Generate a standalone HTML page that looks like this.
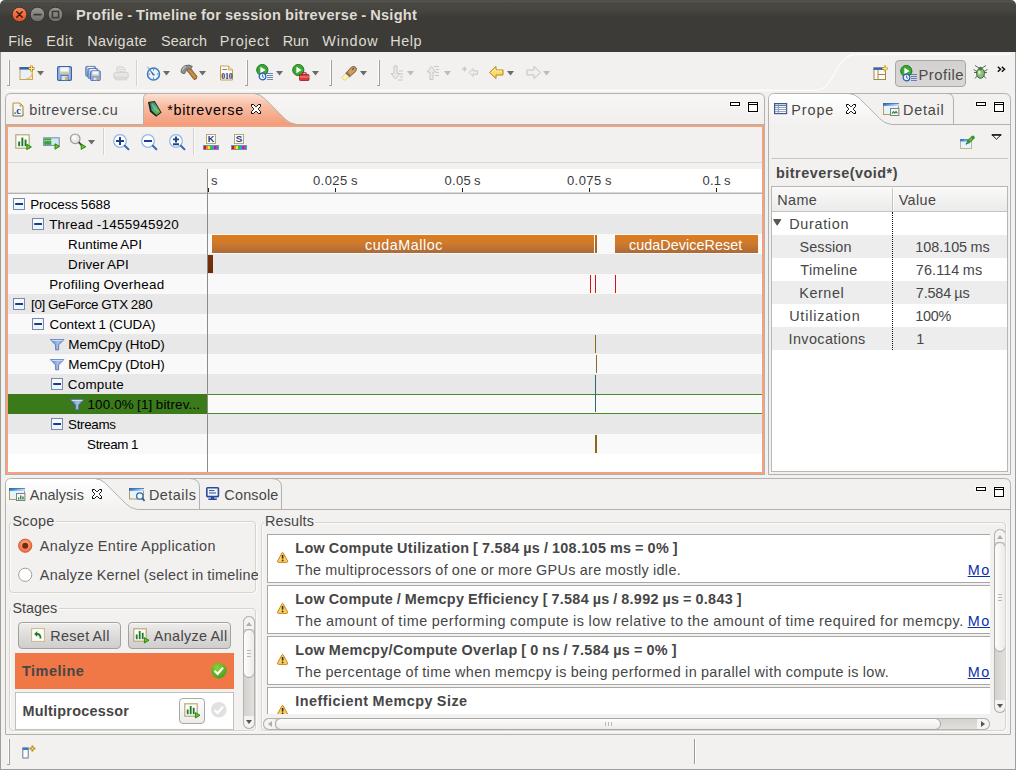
<!DOCTYPE html>
<html lang="en"><head><meta charset="utf-8"><title>Profile - Timeline for session bitreverse - Nsight</title>
<style>
html,body{margin:0;padding:0}
body{width:1016px;height:770px;overflow:hidden;background:#f2f1f0;position:relative;font-family:"Liberation Sans",sans-serif}
.abs{position:absolute}
svg.abs{overflow:visible}
#win{position:absolute;left:0;top:0;width:1016px;height:770px;overflow:hidden}
#titlebar{position:absolute;left:0;top:0;width:1016px;height:52px;background:linear-gradient(#44433e 0,#5b5a54 1px,#4a4944 2.5px,#464540 10px,#3d3c38 16px,#3c3b37 17px,#3c3b37 52px);border-radius:5px 5px 0 0}
#corners{position:absolute;left:0;top:0;width:1016px;height:8px;background:#fff}
#edges{position:absolute;left:0;top:52px;width:1014px;height:717px;border:1px solid #a09e9a;border-top:none;pointer-events:none}
.t{position:absolute;white-space:pre;line-height:20px;height:20px;word-spacing:-0.6px}
</style></head>
<body><div id="corners"></div><div id="win">
<div id="titlebar"></div>
<svg class="abs" style="left:10px;top:5px" width="60" height="20" viewBox="0 0 60 20">
<defs>
<linearGradient id="gclose" x1="0" y1="0" x2="0" y2="1"><stop offset="0" stop-color="#f58a5c"/><stop offset="1" stop-color="#df4f22"/></linearGradient>
<linearGradient id="ggrey" x1="0" y1="0" x2="0" y2="1"><stop offset="0" stop-color="#9a9991"/><stop offset="1" stop-color="#6d6c65"/></linearGradient>
</defs>
<circle cx="9.5" cy="9.5" r="7.3" fill="url(#gclose)" stroke="#2f2e2a" stroke-width="0.9"/>
<path d="M6.8 6.8 L12.2 12.2 M12.2 6.8 L6.8 12.2" stroke="#3a1206" stroke-width="1.3" stroke-linecap="round"/>
<circle cx="27.5" cy="9.5" r="7.3" fill="url(#ggrey)" stroke="#2f2e2a" stroke-width="0.9"/>
<path d="M24.2 9.7 H30.8" stroke="#3a3935" stroke-width="1.8" stroke-linecap="round"/>
<circle cx="45.5" cy="9.5" r="7.3" fill="url(#ggrey)" stroke="#2f2e2a" stroke-width="0.9"/>
<rect x="42.4" y="6.4" width="6.2" height="6.2" fill="none" stroke="#3a3935" stroke-width="1.5"/>
</svg>
<span class="t" style="left:76.08px;top:4.94px;font-size:14.6px;color:#dfdbd2;font-weight:700;letter-spacing:0.278px;">Profile - Timeline for session bitreverse - Nsight</span>
<span class="t" style="left:8.35px;top:31.01px;font-size:14.4px;color:#dfdbd2;letter-spacing:0.204px;">File</span>
<span class="t" style="left:46.14px;top:31.01px;font-size:14.4px;color:#dfdbd2;letter-spacing:0.578px;">Edit</span>
<span class="t" style="left:87.14px;top:31.01px;font-size:14.4px;color:#dfdbd2;letter-spacing:0.417px;">Navigate</span>
<span class="t" style="left:160.94px;top:31.01px;font-size:14.4px;color:#dfdbd2;letter-spacing:0.107px;">Search</span>
<span class="t" style="left:219.86px;top:31.01px;font-size:14.4px;color:#dfdbd2;letter-spacing:0.717px;">Project</span>
<span class="t" style="left:282.86px;top:31.01px;font-size:14.4px;color:#dfdbd2;letter-spacing:-0.302px;">Run</span>
<span class="t" style="left:322.28px;top:31.01px;font-size:14.4px;color:#dfdbd2;letter-spacing:0.832px;">Window</span>
<span class="t" style="left:390.31px;top:31.01px;font-size:14.4px;color:#dfdbd2;letter-spacing:0.505px;">Help</span>
<div class="abs" style="left:9px;top:60px;width:1px;height:25px;background:#a3a19d"></div><div class="abs" style="left:7px;top:85px;width:3px;height:1px;background:#a3a19d"></div><div class="abs" style="left:8px;top:60px;width:1px;height:25px;background:#fdfdfd"></div>
<svg class="abs" style="left:19px;top:65px" width="16" height="16" viewBox="0 0 16 16"><rect x="1" y="2.5" width="12.5" height="12" fill="#e8f0fb" stroke="#c9a648" stroke-width="1"/>
<rect x="0.5" y="2" width="13.5" height="2.6" fill="#3465a8"/>
<path d="M13.5 5 Q13.5 13.5 7 14" fill="none" stroke="#e8c050" stroke-width="1.2"/>
<path d="M12.5 0.5 V6.5 M9.5 3.5 H15.5" stroke="#b8860b" stroke-width="2.4"/><path d="M12.5 1 V6 M10 3.5 H15" stroke="#ffe680" stroke-width="1"/></svg>
<svg class="abs" style="left:37px;top:71px" width="7" height="5" viewBox="0 0 7 5"><path d="M0 0 H7 L3.5 4.6 Z" fill="#6b6b6b"/></svg>
<svg class="abs" style="left:57px;top:66px" width="15" height="15" viewBox="0 0 15 15"><rect x="0.6" y="0.6" width="13.8" height="13.8" rx="1.2" fill="#9db8e0" stroke="#3c64a8" stroke-width="1.2"/>
<rect x="3.2" y="1.2" width="8.6" height="6" fill="#f4f6fa"/><rect x="3.2" y="5.6" width="8.6" height="1.5" fill="#e8c878"/>
<rect x="4" y="9.4" width="7" height="5" fill="#d8e2f2" stroke="#3c64a8" stroke-width="0.8"/><rect x="8" y="10.8" width="2" height="3.4" fill="#e0b050"/></svg>
<svg class="abs" style="left:84.5px;top:66px" width="16" height="15" viewBox="0 0 16 15"><g transform="scale(0.7)"><g transform="translate(0.5,0)"><rect x="0.6" y="0.6" width="13.8" height="13.8" rx="1.2" fill="#9db8e0" stroke="#3c64a8" stroke-width="1.2"/>
<rect x="3.2" y="1.2" width="8.6" height="6" fill="#f4f6fa"/><rect x="3.2" y="5.6" width="8.6" height="1.5" fill="#e8c878"/>
<rect x="4" y="9.4" width="7" height="5" fill="#d8e2f2" stroke="#3c64a8" stroke-width="0.8"/><rect x="8" y="10.8" width="2" height="3.4" fill="#e0b050"/></g></g><g transform="translate(2.6,2.2) scale(0.7)"><rect x="0.6" y="0.6" width="13.8" height="13.8" rx="1.2" fill="#9db8e0" stroke="#3c64a8" stroke-width="1.2"/>
<rect x="3.2" y="1.2" width="8.6" height="6" fill="#f4f6fa"/><rect x="3.2" y="5.6" width="8.6" height="1.5" fill="#e8c878"/>
<rect x="4" y="9.4" width="7" height="5" fill="#d8e2f2" stroke="#3c64a8" stroke-width="0.8"/><rect x="8" y="10.8" width="2" height="3.4" fill="#e0b050"/></g><g transform="translate(5.2,4.4) scale(0.7)"><rect x="0.6" y="0.6" width="13.8" height="13.8" rx="1.2" fill="#9db8e0" stroke="#3c64a8" stroke-width="1.2"/>
<rect x="3.2" y="1.2" width="8.6" height="6" fill="#f4f6fa"/><rect x="3.2" y="5.6" width="8.6" height="1.5" fill="#e8c878"/>
<rect x="4" y="9.4" width="7" height="5" fill="#d8e2f2" stroke="#3c64a8" stroke-width="0.8"/><rect x="8" y="10.8" width="2" height="3.4" fill="#e0b050"/></g></svg>
<svg class="abs" style="left:113px;top:66px" width="16" height="15" viewBox="0 0 16 15"><path d="M4 1 H10 L12 3 V7 H4 Z" fill="#efefef" stroke="#cfcfcf"/><path d="M5.5 3.5 H10.5 M5.5 5.5 H10.5" stroke="#d6d6d6"/>
<rect x="0.8" y="6.5" width="14.4" height="6" rx="1.5" fill="#e6e5e4" stroke="#d2d1d0"/><rect x="2.5" y="11" width="11" height="3" fill="#dddcdb" stroke="#d2d1d0" stroke-width="0.6"/></svg>
<div class="abs" style="left:136px;top:60px;width:1px;height:26px;background:#d4d2cf"></div><div class="abs" style="left:137px;top:60px;width:1px;height:26px;background:#fbfbfa"></div>
<svg class="abs" style="left:146px;top:66px" width="15" height="15" viewBox="0 0 15 15"><circle cx="7.5" cy="8" r="6" fill="#eef4fb" stroke="#3a78c0" stroke-width="1.5"/>
<path d="M7.5 3.2 V4.6 M7.5 11.4 V12.8 M2.8 8 H4.2 M10.8 8 H12.2" stroke="#3a78c0" stroke-width="1"/>
<path d="M1.5 0.8 L9 9.2 L7 9.6 Z" fill="#27508c"/><path d="M1 0.5 L8.5 9" stroke="#8899bb" stroke-width="0.8"/></svg>
<svg class="abs" style="left:163px;top:71px" width="7" height="5" viewBox="0 0 7 5"><path d="M0 0 H7 L3.5 4.6 Z" fill="#6b6b6b"/></svg>
<svg class="abs" style="left:180px;top:64px" width="18" height="17" viewBox="0 0 18 17"><path d="M6.2 5.6 L9.8 3.2 L17 12.4 Q17.2 15.6 14 15.6 Z" fill="#b87a3a" stroke="#7a4a1c" stroke-width="0.7"/><path d="M8.4 5 L15.6 14" stroke="#d8a060" stroke-width="1"/>
<path d="M1 8.2 Q0.8 3.6 5.2 1.6 Q9 0 12.4 2.4 L10.2 5.6 Q8.6 4.4 7.2 5 L4.8 9.4 Q3 10.4 1 8.2 Z" fill="#8c8c8c" stroke="#5a5a5a" stroke-width="0.7"/><path d="M2.4 6.4 Q3 3.6 6 2.6" stroke="#c8c8c8" stroke-width="1.1" fill="none"/></svg>
<svg class="abs" style="left:199px;top:71px" width="7" height="5" viewBox="0 0 7 5"><path d="M0 0 H7 L3.5 4.6 Z" fill="#6b6b6b"/></svg>
<svg class="abs" style="left:219px;top:65px" width="15" height="16" viewBox="0 0 15 16"><path d="M1.5 1 H9.5 L13.5 5 V15 H1.5 Z" fill="#fdfbf2" stroke="#c8a24a" stroke-width="1"/><path d="M9.5 1 V5 H13.5" fill="#f0dca0" stroke="#c8a24a" stroke-width="0.8"/>
<path d="M3.5 4.5 H8" stroke="#5b7fc0" stroke-width="1"/>
<text x="2.2" y="13.6" font-family="Liberation Serif, serif" font-weight="700" font-size="7.6" fill="#1a2f78" textLength="11.5" lengthAdjust="spacingAndGlyphs">010</text></svg>
<div class="abs" style="left:247px;top:60px;width:1px;height:25px;background:#a3a19d"></div><div class="abs" style="left:245px;top:85px;width:3px;height:1px;background:#a3a19d"></div><div class="abs" style="left:246px;top:60px;width:1px;height:25px;background:#fdfdfd"></div>
<svg class="abs" style="left:256px;top:64px" width="18" height="17" viewBox="0 0 18 17"><circle cx="6.3" cy="6" r="5.6" fill="#3aa832" stroke="#1f7a1c" stroke-width="1"/><path d="M4.4 2.8 L9.6 6 L4.4 9.2 Z" fill="#fff"/><circle cx="6.5" cy="12.5" r="3.3" fill="#e6eefb" stroke="#2a5cb0" stroke-width="1.2"/><path d="M6.5 10.6 V12.6 L8 13.4" stroke="#2a5cb0" stroke-width="0.9" fill="none"/>
<path d="M11 9.5 H17 M11 11.5 H17 M11 13.5 H17 M11 15.5 H17" stroke="#5878b8" stroke-width="0.9"/></svg>
<svg class="abs" style="left:275.5px;top:71px" width="7" height="5" viewBox="0 0 7 5"><path d="M0 0 H7 L3.5 4.6 Z" fill="#6b6b6b"/></svg>
<svg class="abs" style="left:292px;top:64px" width="18" height="17" viewBox="0 0 18 17"><circle cx="6.3" cy="6" r="5.6" fill="#3aa832" stroke="#1f7a1c" stroke-width="1"/><path d="M4.4 2.8 L9.6 6 L4.4 9.2 Z" fill="#fff"/><rect x="7.5" y="10.5" width="9.5" height="6" rx="0.8" fill="#d83a3a" stroke="#a01818" stroke-width="0.8"/><path d="M10.3 10.3 V8.8 H14.2 V10.3" fill="none" stroke="#a01818" stroke-width="1"/><path d="M7.6 13 H17" stroke="#f6b0b0" stroke-width="0.8"/></svg>
<svg class="abs" style="left:311.5px;top:71px" width="7" height="5" viewBox="0 0 7 5"><path d="M0 0 H7 L3.5 4.6 Z" fill="#6b6b6b"/></svg>
<div class="abs" style="left:331px;top:60px;width:1px;height:25px;background:#a3a19d"></div><div class="abs" style="left:329px;top:85px;width:3px;height:1px;background:#a3a19d"></div><div class="abs" style="left:330px;top:60px;width:1px;height:25px;background:#fdfdfd"></div>
<svg class="abs" style="left:341px;top:64px" width="17" height="17" viewBox="0 0 17 17"><path d="M0.8 13.6 L3.6 16.4 L8.4 12.4 L5 9 Z" fill="#fff4b0" stroke="#d8b850" stroke-width="0.6"/>
<path d="M4.8 9.2 L10.6 3 Q13 1.6 15 3.6 Q16 5.6 14.6 7.4 L8.6 12.8 Z" fill="#d89a50" stroke="#5a4632" stroke-width="0.8"/>
<path d="M6.2 7.8 L9.8 11.6 L8.6 12.8 L4.8 9.2 Z" fill="#777"/><rect x="11" y="4.4" width="2" height="1.4" fill="#3a5a9a" transform="rotate(-45 12 5)"/></svg>
<svg class="abs" style="left:360px;top:71px" width="7" height="5" viewBox="0 0 7 5"><path d="M0 0 H7 L3.5 4.6 Z" fill="#6b6b6b"/></svg>
<div class="abs" style="left:378.5px;top:60px;width:1px;height:25px;background:#a3a19d"></div><div class="abs" style="left:376.5px;top:85px;width:3px;height:1px;background:#a3a19d"></div><div class="abs" style="left:377.5px;top:60px;width:1px;height:25px;background:#fdfdfd"></div>
<svg class="abs" style="left:389px;top:65px" width="15" height="16" viewBox="0 0 15 16"><path d="M5 1 H8 V8.5 H11 L6.5 14 L2 8.5 H5 Z" fill="#ebeae9" stroke="#c4c3c1" stroke-width="0.9"/><path d="M10 6 H14 M11 9 H14 M11 12 H14 M9 15 H14" stroke="#c4c3c1" stroke-width="0.9"/></svg>
<svg class="abs" style="left:407px;top:71px" width="7" height="5" viewBox="0 0 7 5"><path d="M0 0 H7 L3.5 4.6 Z" fill="#bdbcba"/></svg>
<svg class="abs" style="left:425px;top:65px" width="15" height="16" viewBox="0 0 15 16"><path d="M5 14.5 H8 V7 H11 L6.5 1.5 L2 7 H5 Z" fill="#ebeae9" stroke="#c4c3c1" stroke-width="0.9"/><path d="M9 1.5 H14 M11 4.5 H14 M11 7.5 H14 M10 10.5 H14" stroke="#c4c3c1" stroke-width="0.9"/></svg>
<svg class="abs" style="left:443.5px;top:71px" width="7" height="5" viewBox="0 0 7 5"><path d="M0 0 H7 L3.5 4.6 Z" fill="#bdbcba"/></svg>
<svg class="abs" style="left:461px;top:65px" width="18" height="15" viewBox="0 0 18 15"><path d="M8 7.5 L12 3.5 V5.8 H16.5 V9.2 H12 V11.5 Z" fill="#efeeed" stroke="#c4c3c1" stroke-width="0.9"/><path d="M3.5 1.5 V6.5 M1 4 H6 M1.8 2.2 L5.2 5.8 M5.2 2.2 L1.8 5.8" stroke="#c4c3c1" stroke-width="0.8"/></svg>
<svg class="abs" style="left:488px;top:65px" width="17" height="15" viewBox="0 0 17 15"><path d="M1.5 7.5 L8 1.5 V5 H15 V10 H8 V13.5 Z" fill="#fbd96a" stroke="#b8860b" stroke-width="1"/><path d="M3.4 7.4 L7.2 3.9 V6 H14" fill="none" stroke="#fff3b8" stroke-width="0.9"/></svg>
<svg class="abs" style="left:507px;top:71px" width="7" height="5" viewBox="0 0 7 5"><path d="M0 0 H7 L3.5 4.6 Z" fill="#6b6b6b"/></svg>
<svg class="abs" style="left:525px;top:65px" width="17" height="15" viewBox="0 0 17 15"><path d="M15.5 7.5 L9 1.5 V5 H2 V10 H9 V13.5 Z" fill="#f0efee" stroke="#c4c3c1" stroke-width="1"/></svg>
<svg class="abs" style="left:543px;top:71px" width="7" height="5" viewBox="0 0 7 5"><path d="M0 0 H7 L3.5 4.6 Z" fill="#bdbcba"/></svg>
<svg class="abs" style="left:0px;top:52px" width="1016" height="42" viewBox="0 0 1016 42"><path d="M6 38.4 H814 C837 38.4 833 2.4 857 2.4 H1011" fill="none" stroke="#fdfdfc" stroke-width="1.1"/></svg>
<svg class="abs" style="left:873px;top:65px" width="16" height="16" viewBox="0 0 16 16"><rect x="1" y="3" width="11.5" height="11.5" fill="#fbfaf4" stroke="#a08848" stroke-width="1"/><rect x="0.5" y="2.5" width="12.5" height="2.4" fill="#3465a8"/>
<path d="M5 5 V14.5 M5 9.5 H12.5" stroke="#a08848" stroke-width="1"/>
<path d="M12 0.5 V6.5 M9 3.5 H15" stroke="#c8960c" stroke-width="2.2"/><path d="M12 1.2 V5.8 M9.7 3.5 H14.3" stroke="#fff0a0" stroke-width="0.9"/></svg>
<div class="abs" style="left:895px;top:60px;width:71px;height:27px;border:1px solid #a7a6a3;border-radius:4px;background:linear-gradient(#d2d1d0,#d9d8d7);box-sizing:border-box"></div>
<svg class="abs" style="left:899.5px;top:65px" width="18" height="17" viewBox="0 0 18 17"><circle cx="6.3" cy="6" r="5.6" fill="#3aa832" stroke="#1f7a1c" stroke-width="1"/><path d="M4.4 2.8 L9.6 6 L4.4 9.2 Z" fill="#fff"/><circle cx="6.5" cy="12.5" r="3.3" fill="#e6eefb" stroke="#2a5cb0" stroke-width="1.2"/><path d="M6.5 10.6 V12.6 L8 13.4" stroke="#2a5cb0" stroke-width="0.9" fill="none"/>
<path d="M11 9.5 H17 M11 11.5 H17 M11 13.5 H17 M11 15.5 H17" stroke="#5878b8" stroke-width="0.9"/></svg>
<span class="t" style="left:918.49px;top:64.87px;font-size:14.8px;color:#4a4a4a;letter-spacing:0.502px;">Profile</span>
<svg class="abs" style="left:972px;top:64px" width="17" height="16" viewBox="0 0 17 16"><path d="M8.5 5 L3 1.5 M8.5 5 L14 1.5 M2 8.5 H15 M3 14.5 L6 11 M14 14.5 L11 11 M1.5 5.5 L5 7.5 M15.5 5.5 L12 7.5" stroke="#3f5f4a" stroke-width="0.9"/>
<ellipse cx="8.5" cy="9.3" rx="3.9" ry="5" fill="#8fc07a" stroke="#2f5a34" stroke-width="1"/><circle cx="8.5" cy="4.6" r="1.9" fill="#4a7a4a"/>
<ellipse cx="7.4" cy="8.4" rx="1.3" ry="2" fill="#d6efc4"/></svg>
<svg class="abs" style="left:997px;top:66px" width="9" height="7" viewBox="0 0 9 7"><path d="M0.8 0.8 L3.5 3.3 L0.8 5.8 M4.8 0.8 L7.5 3.3 L4.8 5.8" fill="none" stroke="#111" stroke-width="1.5"/></svg>
<svg class="abs" style="left:5px;top:93px" width="760" height="33" viewBox="0 0 760 33">
<defs><linearGradient id="gtab" x1="0" y1="0" x2="0" y2="1"><stop offset="0" stop-color="#fde3d6"/><stop offset="0.35" stop-color="#f8bfa6"/><stop offset="1" stop-color="#f29a78"/></linearGradient>
<linearGradient id="gstrip" x1="0" y1="0" x2="0" y2="1"><stop offset="0" stop-color="#f7f6f5"/><stop offset="1" stop-color="#f0efee"/></linearGradient></defs>
<path d="M0.5 32 V6 Q0.5 0.5 6 0.5 H754 Q759.5 0.5 759.5 6 V32 Z" fill="url(#gstrip)" stroke="#b3b1ad"/>
<path d="M0.5 31.5 H759.5" stroke="#b3b1ad"/>
<path d="M138.5 32.5 V5.5 Q138.5 0.5 143.5 0.5 H249 Q255 1 259.4 5.3 L279.8 25.7 Q284 30.5 291.5 31.5 V32.5 Z" fill="url(#gtab)"/>
<path d="M138.5 31.5 V5.5 Q138.5 0.5 143.5 0.5 H249 Q255 1 259.4 5.3 L279.8 25.7 Q284 30.5 291.5 31.5" fill="none" stroke="#b3b1ad"/>
</svg>
<div class="abs" style="left:5px;top:124px;width:760px;height:351px;box-sizing:border-box;border:1px solid #b3b1ad;border-top:none"></div>
<div class="abs" style="left:6px;top:125px;width:758px;height:349px;box-sizing:border-box;border:2px solid #f4a17e;background:#f2f1f0"></div>
<svg class="abs" style="left:11.5px;top:101.5px" width="12" height="15" viewBox="0 0 12 15"><defs><linearGradient id="gcf" x1="0" y1="0" x2="0" y2="1"><stop offset="0" stop-color="#c09828"/><stop offset="1" stop-color="#7c6c34"/></linearGradient></defs>
<path d="M1 1 H8 L11 4 V14 H1 Z" fill="#f2f6fc" stroke="url(#gcf)" stroke-width="1"/><path d="M7.6 1.4 V4.4 H10.6 Z" fill="#c8a040"/>
<text x="4.2" y="11.9" font-family="Liberation Serif, serif" font-weight="700" font-size="10.5" fill="#1a4f9a">c</text><rect x="2.4" y="10.4" width="1.4" height="1.4" fill="#1a4f9a"/></svg>
<span class="t" style="left:29.34px;top:100.01px;font-size:14.4px;color:#4a4a4a;letter-spacing:0.499px;">bitreverse.cu</span>
<svg class="abs" style="left:147px;top:100px" width="16" height="18" viewBox="0 0 16 18"><defs><linearGradient id="gnv" x1="0" y1="0" x2="1" y2="1"><stop offset="0" stop-color="#2a6a3a"/><stop offset="0.45" stop-color="#4aa8a0"/><stop offset="0.75" stop-color="#5ab048"/><stop offset="1" stop-color="#2f7a2a"/></linearGradient></defs>
<path d="M1 2 L7.8 1.1 L14.6 12.6 L9.2 16.7 L3 11.7 Z" fill="#14241c"/>
<path d="M2.6 2.6 L7.4 2 L13.6 12.2 L9.6 15.2 L4.6 10.6 Z" fill="url(#gnv)"/>
<path d="M5.4 3 Q8 8 12.6 11.4 L11 12.8 Q6.6 9.6 4 4 Z" fill="#a8d070" opacity="0.55"/></svg>
<span class="t" style="left:167.14px;top:99.61px;font-size:14.4px;color:#000;letter-spacing:0.728px;">*bitreverse</span>
<svg class="abs" style="left:251px;top:104px" width="10" height="10" viewBox="0 0 10 10"><path d="M0.5 0.5 H2.5 L4.5 2.5 H5.5 L7.5 0.5 H9.5 V2.5 L7.5 4.5 V5.5 L9.5 7.5 V9.5 H7.5 L5.5 7.5 H4.5 L2.5 9.5 H0.5 V7.5 L2.5 5.5 V4.5 L0.5 2.5 Z" fill="#fff" stroke="#000" stroke-width="1" stroke-linejoin="miter"/></svg>
<svg class="abs" style="left:729px;top:101px" width="30" height="12" viewBox="0 0 30 12"><rect x="0.5" y="0.5" width="11" height="5" fill="none" stroke="#fafafa"/><rect x="1.5" y="1.5" width="9" height="3" fill="#fff" stroke="#000"/>
<rect x="18.5" y="0.5" width="11" height="11" fill="none" stroke="#fafafa"/><rect x="19.5" y="1.5" width="9" height="9" fill="#fff" stroke="#000"/><path d="M19 3.5 H29" stroke="#000"/></svg>
<svg class="abs" style="left:14.5px;top:133.5px" width="18" height="17" viewBox="0 0 18 17"><rect x="0.8" y="0.8" width="13.4" height="13.4" fill="#fcfcf8" stroke="#b8a878" stroke-width="1.2"/>
<rect x="3.2" y="7.5" width="1.9" height="4.7" fill="#1f7a2a"/><rect x="6.4" y="3.6" width="1.9" height="8.6" fill="#1f7a2a"/><rect x="9.6" y="5.6" width="1.9" height="6.6" fill="#1f7a2a"/>
<g transform="translate(11.4,9.6)"><path d="M0.4 0.6 L5 3.3 L0.4 6 Z" fill="#5ccc1e" stroke="#2a7a10" stroke-width="0.9" stroke-linejoin="round"/></g></svg>
<svg class="abs" style="left:42.5px;top:137px" width="18" height="14" viewBox="0 0 18 14"><rect x="0.6" y="0.8" width="15.6" height="7.6" fill="#cfe8f4" stroke="#7a8aa8" stroke-width="1"/><rect x="1.2" y="1.4" width="7" height="6.4" fill="#3aa040"/><rect x="1.2" y="3" width="7" height="1.2" fill="#8fd08f"/>
<g transform="translate(11.6,6.2)"><path d="M0.4 0.6 L5 3.3 L0.4 6 Z" fill="#5ccc1e" stroke="#2a7a10" stroke-width="0.9" stroke-linejoin="round"/></g></svg>
<svg class="abs" style="left:69px;top:133px" width="19" height="18" viewBox="0 0 19 18"><circle cx="6.2" cy="5.8" r="4.8" fill="#e9e9e9" stroke="#9a9a9a" stroke-width="1.2"/><circle cx="5.2" cy="4.8" r="2.2" fill="#fafafa"/>
<path d="M9.6 9.2 L13 12.6" stroke="#444" stroke-width="1.8"/><g transform="translate(11.8,10.4)"><path d="M0.4 0.6 L5 3.3 L0.4 6 Z" fill="#5ccc1e" stroke="#2a7a10" stroke-width="0.9" stroke-linejoin="round"/></g></svg>
<svg class="abs" style="left:88.2px;top:140.2px" width="7" height="5" viewBox="0 0 7 5"><path d="M0 0 H7 L3.5 4.6 Z" fill="#6b6b6b"/></svg>
<div class="abs" style="left:103px;top:128px;width:1px;height:27px;background:#d4d2cf"></div><div class="abs" style="left:104px;top:128px;width:1px;height:27px;background:#fbfbfa"></div>
<svg class="abs" style="left:111.7px;top:133px" width="20" height="19" viewBox="0 0 20 19"><circle cx="8" cy="8" r="6.3" fill="#fdfeff" stroke="#94b8e0" stroke-width="1.3"/><path d="M12.8 12.8 L16.4 16.2" stroke="#3a68b0" stroke-width="2" stroke-linecap="round"/><path d="M4 8 H12 M8 4 V12" stroke="#1f3f8a" stroke-width="2"/></svg>
<svg class="abs" style="left:140px;top:133px" width="20" height="19" viewBox="0 0 20 19"><circle cx="8" cy="8" r="6.3" fill="#fdfeff" stroke="#94b8e0" stroke-width="1.3"/><path d="M12.8 12.8 L16.4 16.2" stroke="#3a68b0" stroke-width="2" stroke-linecap="round"/><path d="M4 8 H12" stroke="#1f3f8a" stroke-width="2"/></svg>
<svg class="abs" style="left:168px;top:133px" width="20" height="19" viewBox="0 0 20 19"><circle cx="8" cy="8" r="6.3" fill="#fdfeff" stroke="#94b8e0" stroke-width="1.3"/><path d="M12.8 12.8 L16.4 16.2" stroke="#3a68b0" stroke-width="2" stroke-linecap="round"/><path d="M5 6.4 H11 M8 3.4 V9.4 M5 11.2 H11" stroke="#1f3f8a" stroke-width="1.9"/></svg>
<div class="abs" style="left:193px;top:128px;width:1px;height:27px;background:#d4d2cf"></div><div class="abs" style="left:194px;top:128px;width:1px;height:27px;background:#fbfbfa"></div>
<svg class="abs" style="left:203px;top:134px" width="16" height="16" viewBox="0 0 16 16"><rect x="3.5" y="0.5" width="9" height="9" fill="#f8fbff" stroke="#b8a870" stroke-width="1"/>
<text x="8" y="8.2" text-anchor="middle" font-family="Liberation Sans, sans-serif" font-weight="700" font-size="8.8" fill="#1f3f8a" textLength="6.6" lengthAdjust="spacingAndGlyphs">K</text>
<rect x="0" y="11" width="16" height="5" fill="#7090b4"/><rect x="1" y="12" width="2" height="3" fill="#e01010"/><rect x="3" y="12" width="2" height="3" fill="#f88a10"/><rect x="5" y="12" width="2" height="3" fill="#f8f010"/><rect x="7" y="12" width="2" height="3" fill="#30c030"/><rect x="9" y="12" width="2" height="3" fill="#18a8e0"/><rect x="11" y="12" width="2" height="3" fill="#d01888"/><rect x="13" y="12" width="2" height="3" fill="#8858b8"/></svg>
<svg class="abs" style="left:231px;top:134px" width="16" height="16" viewBox="0 0 16 16"><rect x="3.5" y="0.5" width="9" height="9" fill="#f8fbff" stroke="#b8a870" stroke-width="1"/>
<text x="8" y="8.2" text-anchor="middle" font-family="Liberation Sans, sans-serif" font-weight="700" font-size="8.8" fill="#1f3f8a" textLength="6.6" lengthAdjust="spacingAndGlyphs">S</text>
<rect x="0" y="11" width="16" height="5" fill="#7090b4"/><rect x="1" y="12" width="2" height="3" fill="#e01010"/><rect x="3" y="12" width="2" height="3" fill="#f88a10"/><rect x="5" y="12" width="2" height="3" fill="#f8f010"/><rect x="7" y="12" width="2" height="3" fill="#30c030"/><rect x="9" y="12" width="2" height="3" fill="#18a8e0"/><rect x="11" y="12" width="2" height="3" fill="#d01888"/><rect x="13" y="12" width="2" height="3" fill="#8858b8"/></svg>
<div class="abs" style="left:8px;top:162px;width:754px;height:1px;background:#dad8d5"></div>
<div class="abs" style="left:208px;top:169px;width:554px;height:23px;background:#fff"></div>
<div class="abs" style="left:8px;top:193px;width:754px;height:1px;background:#b4b2ae"></div>
<div class="abs" style="left:8px;top:192px;width:754px;height:1px;background:#dcdad7"></div>
<div class="abs" style="left:8px;top:194px;width:754px;height:20px;background:#f9f9f9"></div>
<div class="abs" style="left:8px;top:214px;width:754px;height:20px;background:#e8e8e8"></div>
<div class="abs" style="left:8px;top:234px;width:754px;height:20px;background:#f9f9f9"></div>
<div class="abs" style="left:8px;top:254px;width:754px;height:20px;background:#e8e8e8"></div>
<div class="abs" style="left:8px;top:274px;width:754px;height:20px;background:#f9f9f9"></div>
<div class="abs" style="left:8px;top:294px;width:754px;height:20px;background:#e8e8e8"></div>
<div class="abs" style="left:8px;top:314px;width:754px;height:20px;background:#f9f9f9"></div>
<div class="abs" style="left:8px;top:334px;width:754px;height:20px;background:#e8e8e8"></div>
<div class="abs" style="left:8px;top:354px;width:754px;height:20px;background:#f9f9f9"></div>
<div class="abs" style="left:8px;top:374px;width:754px;height:20px;background:#e8e8e8"></div>
<div class="abs" style="left:8px;top:394px;width:754px;height:20px;background:#f9f9f9"></div>
<div class="abs" style="left:8px;top:414px;width:754px;height:20px;background:#e8e8e8"></div>
<div class="abs" style="left:8px;top:434px;width:754px;height:20px;background:#f9f9f9"></div>
<div class="abs" style="left:8px;top:454px;width:754px;height:18px;background:#fff"></div>
<div class="abs" style="left:8px;top:394px;width:199px;height:20px;background:#3b7a1b"></div>
<div class="abs" style="left:208px;top:394px;width:554px;height:20px;box-sizing:border-box;border-top:1px solid #4a8a28;border-bottom:1px solid #4a8a28;background:#fafafa"></div>
<div class="abs" style="left:207px;top:169px;width:1px;height:303px;background:#8d8b87"></div>
<div class="abs" style="left:208px;top:188px;width:1px;height:4px;background:#222"></div>
<div class="abs" style="left:335px;top:188px;width:1px;height:4px;background:#222"></div>
<div class="abs" style="left:462px;top:188px;width:1px;height:4px;background:#222"></div>
<div class="abs" style="left:589px;top:188px;width:1px;height:4px;background:#222"></div>
<div class="abs" style="left:716px;top:188px;width:1px;height:4px;background:#222"></div>
<span class="t" style="left:210.93px;top:170.90px;font-size:13px;color:#3a3a3a;letter-spacing:0.000px;">s</span>
<span class="t" style="left:312.91px;top:170.90px;font-size:13px;color:#3a3a3a;letter-spacing:0.443px;">0.025 s</span>
<span class="t" style="left:444.58px;top:170.90px;font-size:13px;color:#3a3a3a;letter-spacing:0.245px;">0.05 s</span>
<span class="t" style="left:566.91px;top:170.90px;font-size:13px;color:#3a3a3a;letter-spacing:0.443px;">0.075 s</span>
<span class="t" style="left:702.58px;top:170.90px;font-size:13px;color:#3a3a3a;letter-spacing:0.113px;">0.1 s</span>
<span class="t" style="left:30.17px;top:195.26px;font-size:13.4px;color:#000;letter-spacing:-0.101px;">Process 5688</span>
<svg class="abs" style="left:13px;top:198px" width="12" height="12" viewBox="0 0 12 12"><rect x="0.5" y="0.5" width="11" height="11" fill="#eaf7fe" stroke="#7c88aa"/><rect x="1.5" y="1.5" width="9" height="4" fill="#f6fcff"/><path d="M2.2 6 H10" stroke="#1f3a8a" stroke-width="2"/></svg>
<span class="t" style="left:49.14px;top:215.26px;font-size:13.4px;color:#000;letter-spacing:0.298px;">Thread -1455945920</span>
<svg class="abs" style="left:32px;top:218px" width="12" height="12" viewBox="0 0 12 12"><rect x="0.5" y="0.5" width="11" height="11" fill="#eaf7fe" stroke="#7c88aa"/><rect x="1.5" y="1.5" width="9" height="4" fill="#f6fcff"/><path d="M2.2 6 H10" stroke="#1f3a8a" stroke-width="2"/></svg>
<span class="t" style="left:68.10px;top:235.26px;font-size:13.4px;color:#000;letter-spacing:0.002px;">Runtime API</span>
<span class="t" style="left:68.10px;top:255.26px;font-size:13.4px;color:#000;letter-spacing:0.111px;">Driver API</span>
<span class="t" style="left:49.17px;top:275.26px;font-size:13.4px;color:#000;letter-spacing:0.274px;">Profiling Overhead</span>
<span class="t" style="left:30.91px;top:295.26px;font-size:13.4px;color:#000;letter-spacing:-0.248px;">[0] GeForce GTX 280</span>
<svg class="abs" style="left:13px;top:298px" width="12" height="12" viewBox="0 0 12 12"><rect x="0.5" y="0.5" width="11" height="11" fill="#eaf7fe" stroke="#7c88aa"/><rect x="1.5" y="1.5" width="9" height="4" fill="#f6fcff"/><path d="M2.2 6 H10" stroke="#1f3a8a" stroke-width="2"/></svg>
<span class="t" style="left:49.60px;top:315.26px;font-size:13.4px;color:#000;letter-spacing:-0.048px;">Context 1 (CUDA)</span>
<svg class="abs" style="left:32px;top:318px" width="12" height="12" viewBox="0 0 12 12"><rect x="0.5" y="0.5" width="11" height="11" fill="#eaf7fe" stroke="#7c88aa"/><rect x="1.5" y="1.5" width="9" height="4" fill="#f6fcff"/><path d="M2.2 6 H10" stroke="#1f3a8a" stroke-width="2"/></svg>
<span class="t" style="left:68.26px;top:335.26px;font-size:13.4px;color:#000;letter-spacing:0.037px;">MemCpy (HtoD)</span>
<svg class="abs" style="left:50px;top:339px" width="15" height="12" viewBox="0 0 15 12"><defs><linearGradient id="gfun" x1="0" y1="0" x2="1" y2="0"><stop offset="0" stop-color="#5a80c4"/><stop offset="0.55" stop-color="#a8c0e6"/><stop offset="1" stop-color="#7090cc"/></linearGradient></defs>
<path d="M0.4 0.6 H13.8 L8.6 6 V10.8 H5.6 V6 Z" fill="url(#gfun)" stroke="#4a6cb0" stroke-width="0.8"/><path d="M1.6 1.4 H12.6" stroke="#dce8f8" stroke-width="0.9"/></svg>
<span class="t" style="left:68.26px;top:355.26px;font-size:13.4px;color:#000;letter-spacing:0.037px;">MemCpy (DtoH)</span>
<svg class="abs" style="left:50px;top:359px" width="15" height="12" viewBox="0 0 15 12"><defs><linearGradient id="gfun" x1="0" y1="0" x2="1" y2="0"><stop offset="0" stop-color="#5a80c4"/><stop offset="0.55" stop-color="#a8c0e6"/><stop offset="1" stop-color="#7090cc"/></linearGradient></defs>
<path d="M0.4 0.6 H13.8 L8.6 6 V10.8 H5.6 V6 Z" fill="url(#gfun)" stroke="#4a6cb0" stroke-width="0.8"/><path d="M1.6 1.4 H12.6" stroke="#dce8f8" stroke-width="0.9"/></svg>
<span class="t" style="left:67.77px;top:375.26px;font-size:13.4px;color:#000;letter-spacing:0.262px;">Compute</span>
<svg class="abs" style="left:51px;top:378px" width="12" height="12" viewBox="0 0 12 12"><rect x="0.5" y="0.5" width="11" height="11" fill="#eaf7fe" stroke="#7c88aa"/><rect x="1.5" y="1.5" width="9" height="4" fill="#f6fcff"/><path d="M2.2 6 H10" stroke="#1f3a8a" stroke-width="2"/></svg>
<span class="t" style="left:87.46px;top:395.26px;font-size:13.4px;color:#000;letter-spacing:0.162px;">100.0% [1] bitrev...</span>
<svg class="abs" style="left:69.5px;top:399px" width="15" height="12" viewBox="0 0 15 12"><defs><linearGradient id="gfun" x1="0" y1="0" x2="1" y2="0"><stop offset="0" stop-color="#5a80c4"/><stop offset="0.55" stop-color="#a8c0e6"/><stop offset="1" stop-color="#7090cc"/></linearGradient></defs>
<path d="M0.4 0.6 H13.8 L8.6 6 V10.8 H5.6 V6 Z" fill="url(#gfun)" stroke="#4a6cb0" stroke-width="0.8"/><path d="M1.6 1.4 H12.6" stroke="#dce8f8" stroke-width="0.9"/></svg>
<span class="t" style="left:68.07px;top:415.26px;font-size:13.4px;color:#000;letter-spacing:-0.316px;">Streams</span>
<svg class="abs" style="left:51px;top:418px" width="12" height="12" viewBox="0 0 12 12"><rect x="0.5" y="0.5" width="11" height="11" fill="#eaf7fe" stroke="#7c88aa"/><rect x="1.5" y="1.5" width="9" height="4" fill="#f6fcff"/><path d="M2.2 6 H10" stroke="#1f3a8a" stroke-width="2"/></svg>
<span class="t" style="left:87.07px;top:435.26px;font-size:13.4px;color:#000;letter-spacing:-0.350px;">Stream 1</span>
<div class="abs" style="left:212px;top:235px;width:382px;height:18px;background:linear-gradient(#dd7c20,#d07a2a 45%,#ab6a3a)"></div>
<div class="abs" style="left:595px;top:235px;width:2px;height:18px;background:linear-gradient(#b8701e,#a06428)"></div>
<div class="abs" style="left:615px;top:235px;width:143px;height:18px;background:linear-gradient(#dd7c20,#d07a2a 45%,#ab6a3a)"></div>
<span class="t" style="left:364.92px;top:235.05px;font-size:14.3px;color:#fff;letter-spacing:0.579px;">cudaMalloc</span>
<span class="t" style="left:628.92px;top:235.05px;font-size:14.3px;color:#fff;letter-spacing:0.088px;">cudaDeviceReset</span>
<div class="abs" style="left:208px;top:255px;width:5px;height:18px;background:linear-gradient(#7a3008,#6a2c0c)"></div>
<div class="abs" style="left:590px;top:275px;width:1px;height:18px;background:#d81212"></div>
<div class="abs" style="left:595px;top:275px;width:1px;height:18px;background:#d81212"></div>
<div class="abs" style="left:615px;top:275px;width:1px;height:18px;background:#d81212"></div>
<div class="abs" style="left:595px;top:335px;width:1px;height:18px;background:#8a6a20"></div>
<div class="abs" style="left:596px;top:355px;width:1px;height:18px;background:#8a6a20"></div>
<div class="abs" style="left:595px;top:375px;width:1px;height:37px;background:#2f6a6a"></div>
<div class="abs" style="left:595px;top:435px;width:2px;height:18px;background:#8a6a12"></div>
<svg class="abs" style="left:768px;top:93px" width="243" height="382" viewBox="0 0 243 382">
<defs><linearGradient id="gptab" x1="0" y1="0" x2="0" y2="1"><stop offset="0" stop-color="#ffffff"/><stop offset="1" stop-color="#f2f1f0"/></linearGradient></defs>
<path d="M0.5 381.5 V6.5 Q0.5 0.5 6.5 0.5 H236.5 Q242.5 0.5 242.5 6.5 V381.5 Z" fill="#f2f1f0" stroke="#b3b1ad"/>
<path d="M1 31.5 V6.5 Q1 1 6.5 1 H81 Q87 1 91.4 5.3 L111.8 25.7 Q116 30.5 123.5 31.5 Z" fill="url(#gptab)"/>
<path d="M81 0.5 Q87 1 91.4 5.3 L111.8 25.7 Q116 30.5 123.5 31.5 H242.5" fill="none" stroke="#b3b1ad"/>
<path d="M172 0.5 H179 Q185.5 0.5 185.5 7 V31.5" fill="none" stroke="#b3b1ad"/>
<path d="M3.5 65.5 H240" stroke="#c9c7c3"/>
</svg>
<svg class="abs" style="left:774px;top:103px" width="14" height="12" viewBox="0 0 14 12"><rect x="0.6" y="0.6" width="12" height="10" fill="#fff" stroke="#3f5888" stroke-width="1.2"/>
<path d="M1 2.5 H12.6" stroke="#6078a8" stroke-width="1.2"/><path d="M1 4.6 H12.6 M1 6.6 H12.6 M1 8.6 H12.6" stroke="#8094bc" stroke-width="0.9"/><path d="M4.4 1 V10.6" stroke="#8094bc" stroke-width="0.9"/></svg>
<span class="t" style="left:791.31px;top:99.81px;font-size:14.4px;color:#464646;letter-spacing:0.910px;">Prope</span>
<svg class="abs" style="left:846px;top:104px" width="10" height="10" viewBox="0 0 10 10"><path d="M0.5 0.5 H2.5 L4.5 2.5 H5.5 L7.5 0.5 H9.5 V2.5 L7.5 4.5 V5.5 L9.5 7.5 V9.5 H7.5 L5.5 7.5 H4.5 L2.5 9.5 H0.5 V7.5 L2.5 5.5 V4.5 L0.5 2.5 Z" fill="#fff" stroke="#000" stroke-width="1" stroke-linejoin="miter"/></svg>
<svg class="abs" style="left:883px;top:103px" width="17" height="13" viewBox="0 0 17 13"><defs><linearGradient id="gwt" x1="0" y1="0" x2="1" y2="0"><stop offset="0" stop-color="#2a68b8"/><stop offset="1" stop-color="#cfe4f6"/></linearGradient></defs>
<rect x="0.5" y="1" width="15" height="10.5" fill="#e4f4fc" stroke="#b89a50"/><rect x="0" y="0" width="16" height="2.8" fill="url(#gwt)"/><rect x="0" y="0" width="16" height="1" fill="#2a68b8" opacity="0.7"/><rect x="7.5" y="5.5" width="8.4" height="7" fill="#f4f8fc" stroke="#808080" stroke-width="1"/><path d="M9 10.6 L10.4 8.6 L11.8 10.2 L13 8.4 L14.4 10.4" fill="none" stroke="#2a8a2a" stroke-width="1.1"/></svg>
<span class="t" style="left:903.05px;top:99.81px;font-size:14.4px;color:#464646;letter-spacing:0.767px;">Detail</span>
<svg class="abs" style="left:975px;top:101px" width="30" height="12" viewBox="0 0 30 12"><rect x="0.5" y="0.5" width="11" height="5" fill="none" stroke="#fafafa"/><rect x="1.5" y="1.5" width="9" height="3" fill="#fff" stroke="#000"/>
<rect x="18.5" y="0.5" width="11" height="11" fill="none" stroke="#fafafa"/><rect x="19.5" y="1.5" width="9" height="9" fill="#fff" stroke="#000"/><path d="M19 3.5 H29" stroke="#000"/></svg>
<svg class="abs" style="left:959px;top:135px" width="17" height="15" viewBox="0 0 17 15"><rect x="1.5" y="4.5" width="11" height="9" fill="#e6f4fc" stroke="#c4b488"/><rect x="1" y="4" width="12" height="2.4" fill="#3a80d0"/><path d="M5 5.2 H13" stroke="#a8d0f0" stroke-width="0.8"/>
<path d="M7 9.4 L9.2 7.2" stroke="#1a2f7a" stroke-width="1.1"/><path d="M9.4 6.8 L14 2.4" stroke="#2e9a2a" stroke-width="3.6" stroke-linecap="round"/><path d="M10.6 5.6 L12.8 3.4" stroke="#b8a060" stroke-width="1.4"/></svg>
<svg class="abs" style="left:990.5px;top:134.2px" width="11" height="7" viewBox="0 0 11 7"><path d="M1.2 1 H9.8 L5.5 5.2 Z" fill="#fff" stroke="#000" stroke-width="0.9"/><path d="M0.6 0.9 H10.4" stroke="#000" stroke-width="1.2"/></svg>
<span class="t" style="left:775.99px;top:163.21px;font-size:14.4px;color:#464646;font-weight:700;letter-spacing:0.494px;">bitreverse(void*)</span>
<div class="abs" style="left:771px;top:186px;width:237px;height:286px;box-sizing:border-box;border:1px solid #b9b7b3;background:#fff"></div>
<div class="abs" style="left:772px;top:187px;width:235px;height:24px;background:linear-gradient(#fafafa,#ecebea);border-bottom:1px solid #c6c4c0"></div>
<div class="abs" style="left:892px;top:188px;width:1px;height:23px;background:#c6c4c0"></div><div class="abs" style="left:893px;top:188px;width:1px;height:23px;background:#fff"></div>
<span class="t" style="left:777.14px;top:189.81px;font-size:14.4px;color:#464646;letter-spacing:0.454px;">Name</span>
<span class="t" style="left:898.69px;top:189.81px;font-size:14.4px;color:#464646;letter-spacing:0.364px;">Value</span>
<span class="t" style="left:789.14px;top:213.81px;font-size:14.4px;color:#464646;letter-spacing:0.709px;">Duration</span>
<div class="abs" style="left:772px;top:235px;width:235px;height:23px;background:#ededed"></div>
<span class="t" style="left:799.40px;top:236.81px;font-size:14.4px;color:#464646;letter-spacing:0.149px;">Session</span>
<span class="t" style="left:915.26px;top:236.81px;font-size:14.4px;color:#464646;letter-spacing:-0.024px;">108.105 ms</span>
<span class="t" style="left:800.27px;top:259.81px;font-size:14.4px;color:#464646;letter-spacing:0.441px;">Timeline</span>
<span class="t" style="left:915.85px;top:259.81px;font-size:14.4px;color:#464646;letter-spacing:0.093px;">76.114 ms</span>
<div class="abs" style="left:772px;top:281px;width:235px;height:23px;background:#ededed"></div>
<span class="t" style="left:799.31px;top:282.81px;font-size:14.4px;color:#464646;letter-spacing:0.554px;">Kernel</span>
<span class="t" style="left:915.85px;top:282.81px;font-size:14.4px;color:#464646;letter-spacing:-0.158px;">7.584 µs</span>
<span class="t" style="left:789.14px;top:305.81px;font-size:14.4px;color:#464646;letter-spacing:0.814px;">Utilization</span>
<span class="t" style="left:915.26px;top:305.81px;font-size:14.4px;color:#464646;letter-spacing:-0.267px;">100%</span>
<div class="abs" style="left:772px;top:327px;width:235px;height:23px;background:#ededed"></div>
<span class="t" style="left:788.55px;top:328.81px;font-size:14.4px;color:#464646;letter-spacing:0.390px;">Invocations</span>
<span class="t" style="left:916.17px;top:328.81px;font-size:14.4px;color:#464646;letter-spacing:0.000px;">1</span>
<svg class="abs" style="left:773px;top:219px" width="9" height="7" viewBox="0 0 9 7"><path d="M0.6 0.6 H7.8 L4.2 6.2 Z" fill="#5a5a5a" stroke="#3a3a3a" stroke-width="0.8"/></svg>
<div class="abs" style="left:892px;top:212px;width:0;height:138px;border-left:1px dotted #111"></div>
<svg class="abs" style="left:5px;top:478px" width="1006" height="258" viewBox="0 0 1006 258">
<path d="M0.5 256.5 V6.5 Q0.5 0.5 6.5 0.5 H999.5 Q1005.5 0.5 1005.5 6.5 V256.5 Z" fill="#f2f1f0" stroke="#b3b1ad"/>
<path d="M1 31.5 V6.5 Q1 1 6.5 1 H90 Q96 1 100.4 5.3 L120.8 25.7 Q125 30.5 132.5 31.5 Z" fill="url(#gptab)"/>
<path d="M90 0.5 Q96 1 100.4 5.3 L120.8 25.7 Q125 30.5 132.5 31.5 H1005.5" fill="none" stroke="#b3b1ad"/>
<path d="M184 0.5 Q194.5 0.5 194.5 9 V31.5" fill="none" stroke="#b3b1ad"/>
<path d="M266 0.5 Q276.5 0.5 276.5 9 V31.5" fill="none" stroke="#b3b1ad"/>
</svg>
<svg class="abs" style="left:9px;top:488px" width="17" height="13" viewBox="0 0 17 13"><defs><linearGradient id="gwt" x1="0" y1="0" x2="1" y2="0"><stop offset="0" stop-color="#2a68b8"/><stop offset="1" stop-color="#cfe4f6"/></linearGradient></defs>
<rect x="0.5" y="1" width="15" height="10.5" fill="#e4f4fc" stroke="#b89a50"/><rect x="0" y="0" width="16" height="2.8" fill="url(#gwt)"/><rect x="0" y="0" width="16" height="1" fill="#2a68b8" opacity="0.7"/><rect x="7.5" y="5.5" width="8.4" height="7" fill="#f4f8fc" stroke="#808080" stroke-width="1"/><path d="M9.6 11.4 V9.4 M11.8 11.4 V7.4 M14 11.4 V8.4" stroke="#1f7a2a" stroke-width="1.3"/></svg>
<span class="t" style="left:29.76px;top:485.01px;font-size:14.4px;color:#464646;letter-spacing:0.070px;">Analysis</span>
<svg class="abs" style="left:92px;top:489px" width="10" height="10" viewBox="0 0 10 10"><path d="M0.5 0.5 H2.5 L4.5 2.5 H5.5 L7.5 0.5 H9.5 V2.5 L7.5 4.5 V5.5 L9.5 7.5 V9.5 H7.5 L5.5 7.5 H4.5 L2.5 9.5 H0.5 V7.5 L2.5 5.5 V4.5 L0.5 2.5 Z" fill="#fff" stroke="#000" stroke-width="1" stroke-linejoin="miter"/></svg>
<svg class="abs" style="left:129px;top:488px" width="17" height="14" viewBox="0 0 17 14"><defs><linearGradient id="gwt" x1="0" y1="0" x2="1" y2="0"><stop offset="0" stop-color="#2a68b8"/><stop offset="1" stop-color="#cfe4f6"/></linearGradient></defs>
<rect x="0.5" y="1" width="14" height="10" fill="#e4f4fc" stroke="#b89a50"/><rect x="0" y="0" width="15" height="2.8" fill="url(#gwt)"/><rect x="0" y="0" width="15" height="1" fill="#2a68b8" opacity="0.7"/><circle cx="10.8" cy="8" r="3.2" fill="#f8fcff" stroke="#3a68b0" stroke-width="1.3"/><path d="M13.2 10.4 L15.6 12.8" stroke="#2a58a8" stroke-width="1.7"/></svg>
<span class="t" style="left:148.91px;top:484.81px;font-size:14.4px;color:#464646;letter-spacing:0.501px;">Details</span>
<svg class="abs" style="left:206px;top:486.5px" width="14" height="14" viewBox="0 0 14 14"><rect x="0.8" y="0.8" width="11.6" height="8.8" rx="0.8" fill="#f0f4fa" stroke="#2a4a9a" stroke-width="1.6"/><path d="M3 3.6 H8.4 M3 6 H10" stroke="#2a4a9a" stroke-width="1"/>
<path d="M5 10 V11.6 H2.4 V13 H10.8 V11.6 H8.2 V10 Z" fill="#2a4a9a"/></svg>
<span class="t" style="left:224.37px;top:484.81px;font-size:14.4px;color:#464646;letter-spacing:0.196px;">Console</span>
<svg class="abs" style="left:975px;top:486px" width="30" height="12" viewBox="0 0 30 12"><rect x="0.5" y="0.5" width="11" height="5" fill="none" stroke="#fafafa"/><rect x="1.5" y="1.5" width="9" height="3" fill="#fff" stroke="#000"/>
<rect x="18.5" y="0.5" width="11" height="11" fill="none" stroke="#fafafa"/><rect x="19.5" y="1.5" width="9" height="9" fill="#fff" stroke="#000"/><path d="M19 3.5 H29" stroke="#000"/></svg>
<div class="abs" style="left:9px;top:521px;width:247px;height:72px;box-sizing:border-box;border:1px solid #d6d4d0;border-radius:4px;box-shadow:inset 1px 1px 0 #fbfbfa, 1px 1px 0 #fbfbfa;"></div><div class="abs" style="left:11px;top:519px;width:44.8px;height:5px;background:#f2f1f0"></div>
<span class="t" style="left:12.40px;top:510.61px;font-size:14.4px;color:#464646;letter-spacing:0.286px;">Scope</span>
<svg class="abs" style="left:17px;top:537px" width="17" height="46" viewBox="0 0 17 46">
<defs><radialGradient id="grad1" cx="0.5" cy="0.4" r="0.6"><stop offset="0" stop-color="#f8b090"/><stop offset="1" stop-color="#ee6a38"/></radialGradient></defs>
<circle cx="8.2" cy="8.7" r="6.6" fill="url(#grad1)" stroke="#d9572a" stroke-width="1"/><circle cx="8.2" cy="8.7" r="3" fill="#6e2c18"/>
<circle cx="8.2" cy="37.8" r="6.6" fill="#fff" stroke="#a09e9a" stroke-width="1"/></svg>
<span class="t" style="left:39.76px;top:536.21px;font-size:14.4px;color:#464646;letter-spacing:0.423px;">Analyze Entire Application</span>
<div class="abs" style="left:36px;top:562px;width:222px;height:26px;overflow:hidden"><span class="t" style="left:3.76px;top:3.21px;font-size:14.4px;color:#464646;letter-spacing:0.289px;">Analyze Kernel (select in timeline)</span></div>
<div class="abs" style="left:9px;top:608px;width:247px;height:123px;box-sizing:border-box;border:1px solid #d6d4d0;border-radius:4px;box-shadow:inset 1px 1px 0 #fbfbfa, 1px 1px 0 #fbfbfa;"></div><div class="abs" style="left:11px;top:606px;width:48px;height:5px;background:#f2f1f0"></div>
<span class="t" style="left:12.40px;top:598.31px;font-size:14.4px;color:#464646;letter-spacing:0.008px;">Stages</span>
<div class="abs" style="left:18px;top:622px;width:103px;height:27px;box-sizing:border-box;border:1px solid #a3a19d;border-radius:4px;background:linear-gradient(#eeedec,#dad9d7 60%,#cfcecc);box-shadow:inset 0 1px 0 #fafafa"></div>
<div class="abs" style="left:128px;top:622px;width:103px;height:27px;box-sizing:border-box;border:1px solid #a3a19d;border-radius:4px;background:linear-gradient(#eeedec,#dad9d7 60%,#cfcecc);box-shadow:inset 0 1px 0 #fafafa"></div>
<svg class="abs" style="left:31px;top:628px" width="15" height="14" viewBox="0 0 15 14"><rect x="0.6" y="0.6" width="12.8" height="12.8" fill="#fdfdf8" stroke="#c8b888" stroke-width="1"/><path d="M3.2 6 L6.2 3 V5 Q10.6 5 10.4 10.6 H8.6 Q8.8 7 6.2 7 V9 Z" fill="#1f7a2a"/></svg>
<span class="t" style="left:50.14px;top:626.31px;font-size:14.4px;color:#464646;letter-spacing:0.380px;">Reset All</span>
<svg class="abs" style="left:133px;top:627.5px" width="18" height="17" viewBox="0 0 18 17"><rect x="0.8" y="0.8" width="12.4" height="12.4" fill="#fcfcf8" stroke="#b8a878" stroke-width="1.2"/>
<rect x="2.8" y="6.5" width="1.8" height="4.7" fill="#1f7a2a"/><rect x="5.8" y="3" width="1.8" height="8.2" fill="#1f7a2a"/><rect x="8.8" y="4.8" width="1.8" height="6.4" fill="#1f7a2a"/>
<g transform="translate(11,9)"><path d="M0.4 0.6 L5 3.3 L0.4 6 Z" fill="#5ccc1e" stroke="#2a7a10" stroke-width="0.9" stroke-linejoin="round"/></g></svg>
<span class="t" style="left:153.76px;top:626.31px;font-size:14.4px;color:#464646;letter-spacing:0.354px;">Analyze All</span>
<div class="abs" style="left:15px;top:653px;width:219px;height:36px;background:#f07746"></div>
<span class="t" style="left:22.09px;top:660.61px;font-size:14.4px;color:#464646;font-weight:700;letter-spacing:0.499px;">Timeline</span>
<svg class="abs" style="left:210px;top:662px" width="18" height="18" viewBox="0 0 18 18"><defs><radialGradient id="gchk" cx="0.4" cy="0.3" r="0.8"><stop offset="0" stop-color="#8fd23a"/><stop offset="1" stop-color="#3f9a12"/></radialGradient></defs>
<circle cx="8.8" cy="8.6" r="7.8" fill="url(#gchk)"/><path d="M4.6 8.8 L7.6 11.8 L13 5.6" fill="none" stroke="#fff" stroke-width="2.2"/></svg>
<div class="abs" style="left:15px;top:692px;width:219px;height:38px;box-sizing:border-box;border:1px solid #c2c0bc;background:#fff"></div>
<span class="t" style="left:22.57px;top:701.31px;font-size:14.4px;color:#464646;font-weight:700;letter-spacing:0.242px;">Multiprocessor</span>
<div class="abs" style="left:179px;top:698px;width:26px;height:26px;box-sizing:border-box;border:1px solid #aaa8a4;border-radius:4px;background:linear-gradient(#ffffff,#ecebea)"></div>
<svg class="abs" style="left:184px;top:702.5px" width="18" height="17" viewBox="0 0 18 17"><rect x="0.8" y="0.8" width="12.4" height="12.4" fill="#fcfcf8" stroke="#b8a878" stroke-width="1.2"/>
<rect x="2.8" y="6.5" width="1.8" height="4.7" fill="#1f7a2a"/><rect x="5.8" y="3" width="1.8" height="8.2" fill="#1f7a2a"/><rect x="8.8" y="4.8" width="1.8" height="6.4" fill="#1f7a2a"/>
<g transform="translate(11,9)"><path d="M0.4 0.6 L5 3.3 L0.4 6 Z" fill="#5ccc1e" stroke="#2a7a10" stroke-width="0.9" stroke-linejoin="round"/></g></svg>
<svg class="abs" style="left:210px;top:701px" width="18" height="18" viewBox="0 0 18 18"><circle cx="8.8" cy="8.8" r="7.8" fill="#e2e1df"/><path d="M4.6 9 L7.6 12 L13 5.8" fill="none" stroke="#fff" stroke-width="2.2"/></svg>
<div class="abs" style="left:242.5px;top:616px;width:12px;height:113px;box-sizing:border-box;border:1px solid #b5b3af;border-radius:6px;background:linear-gradient(90deg,#d4d2cf,#e2e0dd)"></div><div class="abs" style="left:242.5px;top:616px;width:12px;height:13px;box-sizing:border-box;border:1px solid #b5b3af;border-bottom:none;border-radius:6px 6px 0 0;background:#f4f3f2"></div><div class="abs" style="left:242.5px;top:629px;width:12px;height:49px;box-sizing:border-box;border:1px solid #a9a7a3;border-radius:6px;background:linear-gradient(90deg,#fdfdfd,#ecebea)"></div><div class="abs" style="left:246.5px;top:650px;width:4px;height:1px;background:#bab8b4"></div><div class="abs" style="left:246.5px;top:653px;width:4px;height:1px;background:#bab8b4"></div><div class="abs" style="left:246.5px;top:656px;width:4px;height:1px;background:#bab8b4"></div><svg class="abs" style="left:245.5px;top:621.5px" width="6" height="4" viewBox="0 0 6 4"><path d="M0 4 H6 L3 0 Z" fill="#b0aeaa"/></svg><div class="abs" style="left:242.5px;top:716px;width:12px;height:13px;box-sizing:border-box;border:1px solid #b5b3af;border-top:none;border-radius:0 0 6px 6px;background:#f4f3f2"></div><svg class="abs" style="left:245.5px;top:720px" width="6" height="4" viewBox="0 0 6 4"><path d="M0 0 H6 L3 4 Z" fill="#555"/></svg>
<div class="abs" style="left:993.5px;top:529px;width:12px;height:184px;box-sizing:border-box;border:1px solid #b5b3af;border-radius:6px;background:linear-gradient(90deg,#d4d2cf,#e2e0dd)"></div><div class="abs" style="left:993.5px;top:529px;width:12px;height:13px;box-sizing:border-box;border:1px solid #b5b3af;border-bottom:none;border-radius:6px 6px 0 0;background:#f4f3f2"></div><div class="abs" style="left:993.5px;top:542px;width:12px;height:110px;box-sizing:border-box;border:1px solid #a9a7a3;border-radius:6px;background:linear-gradient(90deg,#fdfdfd,#ecebea)"></div><div class="abs" style="left:997.5px;top:594px;width:4px;height:1px;background:#bab8b4"></div><div class="abs" style="left:997.5px;top:597px;width:4px;height:1px;background:#bab8b4"></div><div class="abs" style="left:997.5px;top:600px;width:4px;height:1px;background:#bab8b4"></div><svg class="abs" style="left:996.5px;top:534.5px" width="6" height="4" viewBox="0 0 6 4"><path d="M0 4 H6 L3 0 Z" fill="#b0aeaa"/></svg><div class="abs" style="left:993.5px;top:700px;width:12px;height:13px;box-sizing:border-box;border:1px solid #b5b3af;border-top:none;border-radius:0 0 6px 6px;background:#f4f3f2"></div><svg class="abs" style="left:996.5px;top:704px" width="6" height="4" viewBox="0 0 6 4"><path d="M0 0 H6 L3 4 Z" fill="#555"/></svg>
<div class="abs" style="left:262.5px;top:717.5px;width:727.0px;height:12px;box-sizing:border-box;border:1px solid #b5b3af;border-radius:6px;background:linear-gradient(#d4d2cf,#e2e0dd)"></div><div class="abs" style="left:262.5px;top:717.5px;width:12.5px;height:12px;box-sizing:border-box;border:1px solid #b5b3af;border-right:none;border-radius:6px 0 0 6px;background:#f4f3f2"></div><div class="abs" style="left:275px;top:717.5px;width:666px;height:12px;box-sizing:border-box;border:1px solid #a9a7a3;border-radius:6px;background:linear-gradient(#fdfdfd,#ecebea)"></div><div class="abs" style="left:605px;top:721.5px;width:1px;height:4px;background:#bab8b4"></div><div class="abs" style="left:608px;top:721.5px;width:1px;height:4px;background:#bab8b4"></div><div class="abs" style="left:611px;top:721.5px;width:1px;height:4px;background:#bab8b4"></div><svg class="abs" style="left:268.0px;top:720.5px" width="4" height="6" viewBox="0 0 4 6"><path d="M4 0 V6 L0 3 Z" fill="#b0aeaa"/></svg><div class="abs" style="left:976.5px;top:717.5px;width:13px;height:12px;box-sizing:border-box;border:1px solid #b5b3af;border-left:none;border-radius:0 6px 6px 0;background:#f4f3f2"></div><svg class="abs" style="left:980.5px;top:720.5px" width="4" height="6" viewBox="0 0 4 6"><path d="M0 0 V6 L4 3 Z" fill="#555"/></svg>
<div class="abs" style="left:261px;top:522px;width:745px;height:209px;box-sizing:border-box;border:1px solid #d6d4d0;border-radius:4px;box-shadow:inset 1px 1px 0 #fbfbfa, 1px 1px 0 #fbfbfa;"></div><div class="abs" style="left:263.8px;top:520px;width:51.5px;height:5px;background:#f2f1f0"></div>
<span class="t" style="left:265.05px;top:510.81px;font-size:14.4px;color:#464646;letter-spacing:0.133px;">Results</span>
<div class="abs" style="left:267px;top:530px;width:723px;height:184px;overflow:hidden" id="results">
<div class="abs" style="left:0;top:4px;width:740px;height:49px;box-sizing:border-box;border:1px solid #a9a7a3;background:#fff"></div>
<svg class="abs" style="left:10px;top:21.5px" width="12" height="11" viewBox="0 0 12 11"><path d="M5 0.8 Q5.6 0 6.2 0.8 L10.6 9 Q11 10.2 9.8 10.4 H1.4 Q0.2 10.2 0.6 9 Z" fill="#f8d068" stroke="#c8861a" stroke-width="1"/><path d="M5.6 3 V6.6" stroke="#3a2a10" stroke-width="1.6"/><circle cx="5.6" cy="8.4" r="0.9" fill="#3a2a10"/></svg>
<span class="t" style="left:28.29px;top:8.01px;font-size:14.4px;color:#464646;font-weight:700;letter-spacing:0.322px;">Low Compute Utilization [ 7.584 µs / 108.105 ms = 0% ]</span>
<span class="t" style="left:28.56px;top:30.01px;font-size:14.4px;color:#464646;letter-spacing:0.370px;">The multiprocessors of one or more GPUs are mostly idle.</span>
<span class="t" style="left:700.67px;top:30.01px;font-size:14.4px;color:#0a2fa8;letter-spacing:1.580px;text-decoration:underline">More</span>
<div class="abs" style="left:0;top:55px;width:740px;height:49px;box-sizing:border-box;border:1px solid #a9a7a3;background:#fff"></div>
<svg class="abs" style="left:10px;top:72.5px" width="12" height="11" viewBox="0 0 12 11"><path d="M5 0.8 Q5.6 0 6.2 0.8 L10.6 9 Q11 10.2 9.8 10.4 H1.4 Q0.2 10.2 0.6 9 Z" fill="#f8d068" stroke="#c8861a" stroke-width="1"/><path d="M5.6 3 V6.6" stroke="#3a2a10" stroke-width="1.6"/><circle cx="5.6" cy="8.4" r="0.9" fill="#3a2a10"/></svg>
<span class="t" style="left:28.29px;top:59.01px;font-size:14.4px;color:#464646;font-weight:700;letter-spacing:0.302px;">Low Compute / Memcpy Efficiency [ 7.584 µs / 8.992 µs = 0.843 ]</span>
<span class="t" style="left:28.56px;top:81.01px;font-size:14.4px;color:#464646;letter-spacing:0.556px;">The amount of time performing compute is low relative to the amount of time required for memcpy.</span>
<span class="t" style="left:700.67px;top:81.01px;font-size:14.4px;color:#0a2fa8;letter-spacing:1.580px;text-decoration:underline">More</span>
<div class="abs" style="left:0;top:106px;width:740px;height:49px;box-sizing:border-box;border:1px solid #a9a7a3;background:#fff"></div>
<svg class="abs" style="left:10px;top:123.5px" width="12" height="11" viewBox="0 0 12 11"><path d="M5 0.8 Q5.6 0 6.2 0.8 L10.6 9 Q11 10.2 9.8 10.4 H1.4 Q0.2 10.2 0.6 9 Z" fill="#f8d068" stroke="#c8861a" stroke-width="1"/><path d="M5.6 3 V6.6" stroke="#3a2a10" stroke-width="1.6"/><circle cx="5.6" cy="8.4" r="0.9" fill="#3a2a10"/></svg>
<span class="t" style="left:28.29px;top:110.01px;font-size:14.4px;color:#464646;font-weight:700;letter-spacing:0.352px;">Low Memcpy/Compute Overlap [ 0 ns / 7.584 µs = 0% ]</span>
<span class="t" style="left:28.56px;top:132.01px;font-size:14.4px;color:#464646;letter-spacing:0.425px;">The percentage of time when memcpy is being performed in parallel with compute is low.</span>
<span class="t" style="left:700.67px;top:132.01px;font-size:14.4px;color:#0a2fa8;letter-spacing:1.580px;text-decoration:underline">More</span>
<div class="abs" style="left:0;top:157px;width:740px;height:49px;box-sizing:border-box;border:1px solid #a9a7a3;background:#fff"></div>
<svg class="abs" style="left:10px;top:174.5px" width="12" height="11" viewBox="0 0 12 11"><path d="M5 0.8 Q5.6 0 6.2 0.8 L10.6 9 Q11 10.2 9.8 10.4 H1.4 Q0.2 10.2 0.6 9 Z" fill="#f8d068" stroke="#c8861a" stroke-width="1"/><path d="M5.6 3 V6.6" stroke="#3a2a10" stroke-width="1.6"/><circle cx="5.6" cy="8.4" r="0.9" fill="#3a2a10"/></svg>
<span class="t" style="left:28.29px;top:161.01px;font-size:14.4px;color:#464646;font-weight:700;letter-spacing:0.485px;">Inefficient Memcpy Size</span>
</div>
<div class="abs" style="left:9px;top:739px;width:1px;height:25px;background:#a3a19d"></div><div class="abs" style="left:7px;top:764px;width:3px;height:1px;background:#a3a19d"></div><div class="abs" style="left:8px;top:739px;width:1px;height:25px;background:#fdfdfd"></div>
<svg class="abs" style="left:22px;top:745px" width="15" height="14" viewBox="0 0 15 14"><rect x="0.8" y="3" width="5.4" height="10" fill="#fdfdfd" stroke="#6a7a9a" stroke-width="1"/><rect x="0.8" y="2.6" width="5.4" height="2.4" fill="#3a78c8"/>
<path d="M10.4 0.6 V6.4 M7.5 3.5 H13.3" stroke="#b8860b" stroke-width="1.8"/><rect x="9.6" y="2.7" width="1.6" height="1.6" fill="#fff6b0"/></svg>
<div class="abs" style="left:694px;top:739px;width:1px;height:25px;background:#9c9a96"></div><div class="abs" style="left:695px;top:739px;width:1px;height:25px;background:#fff"></div>
<div id="edges"></div></div></body></html>
